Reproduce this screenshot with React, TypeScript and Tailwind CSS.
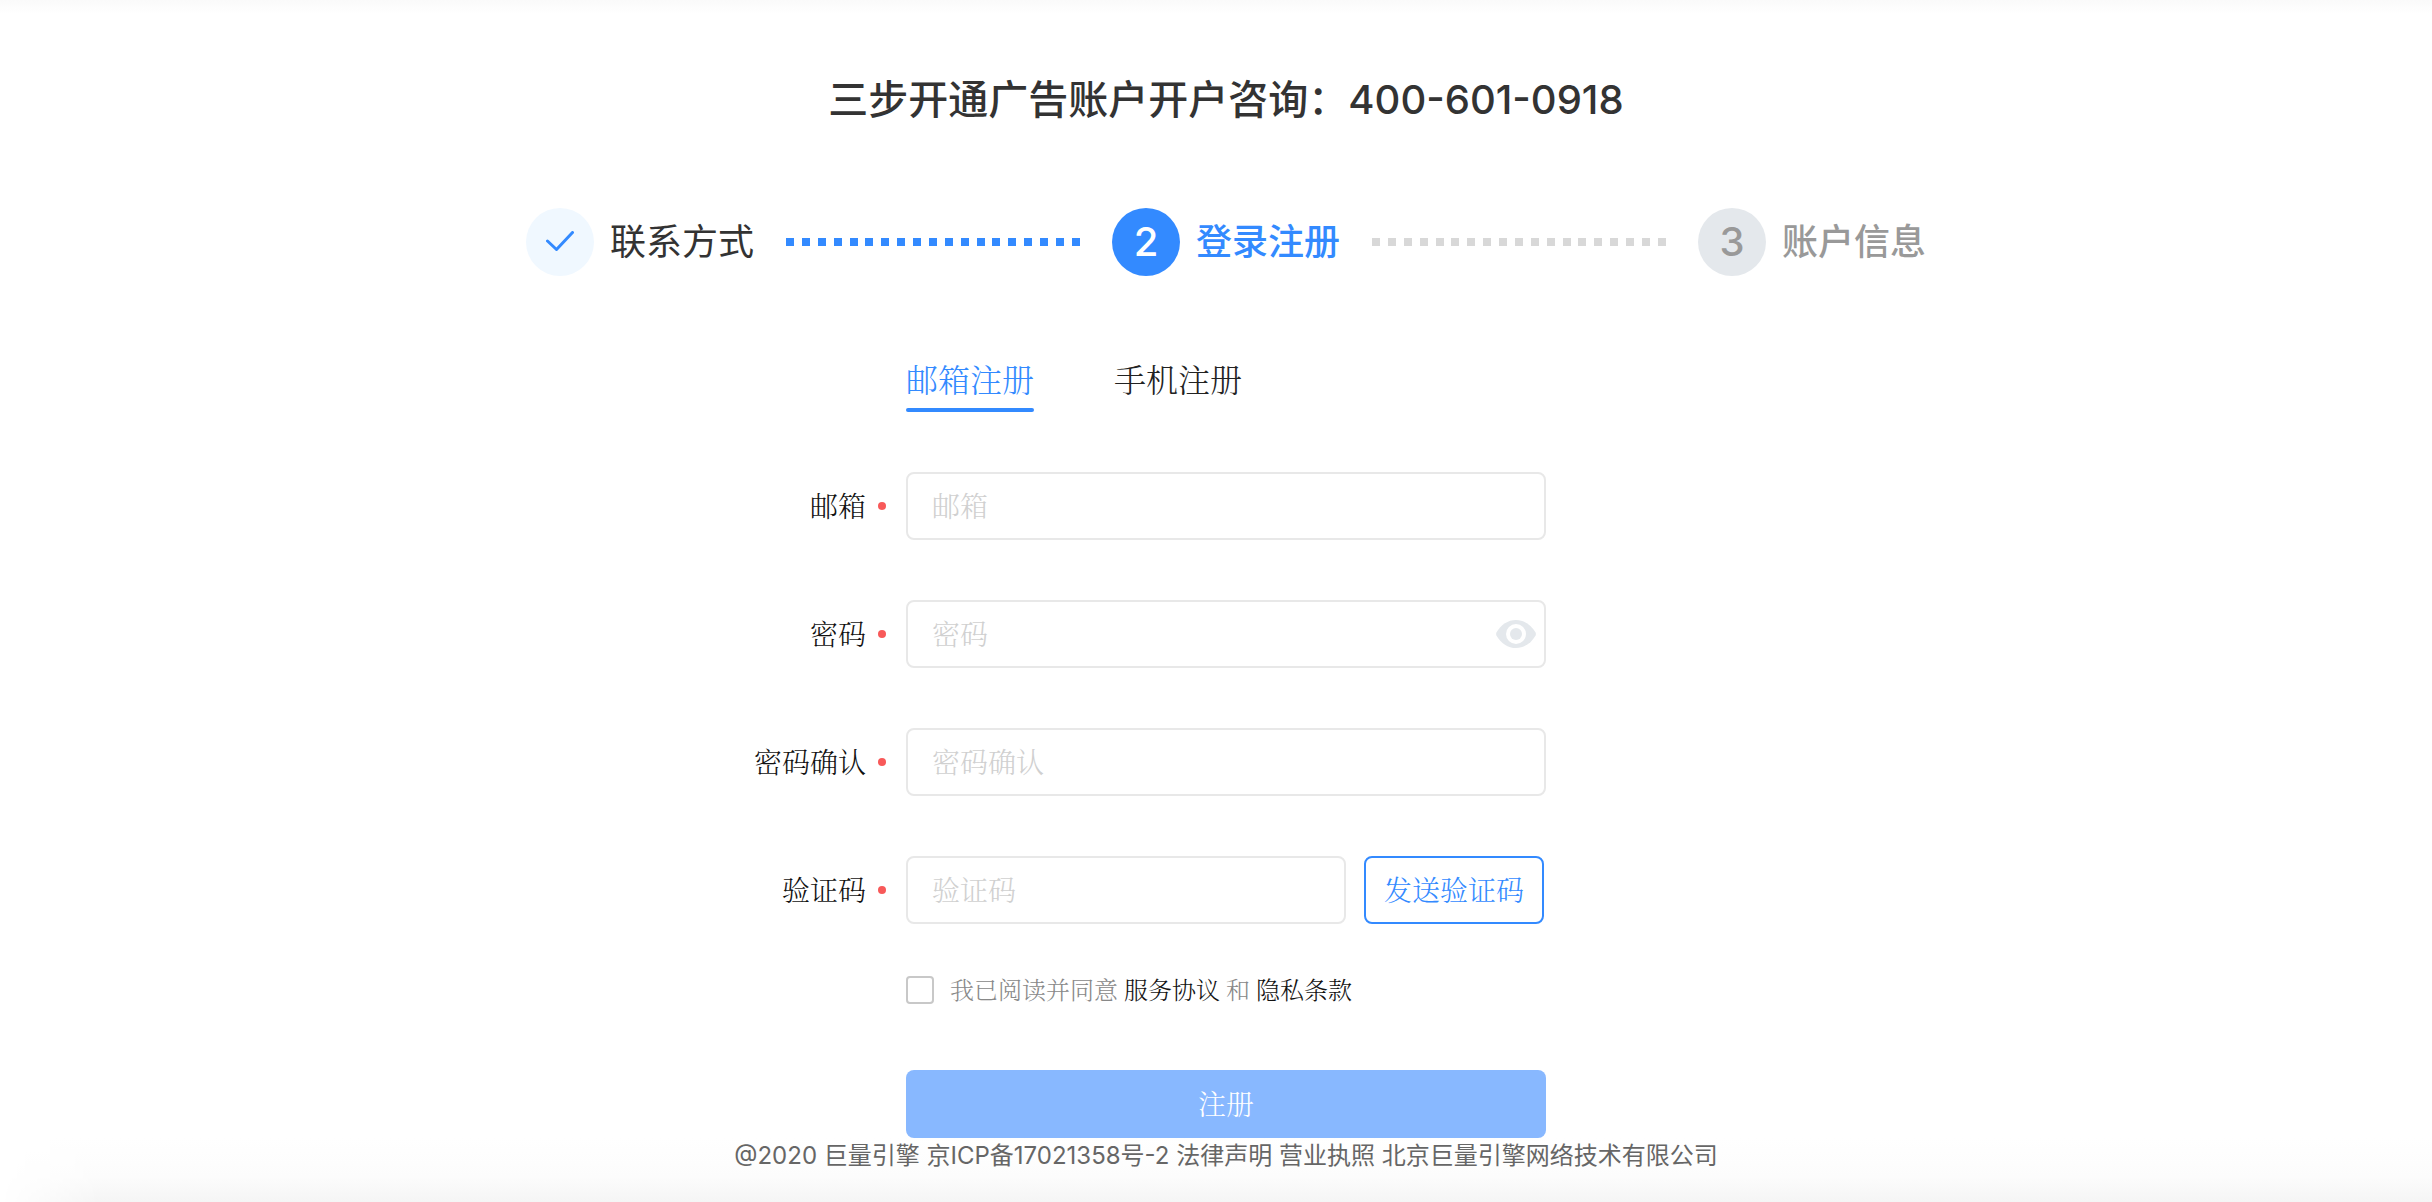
import type { ReactNode } from 'react';

type FieldProps = {
  id: string;
  label: string;
  type?: string;
  children?: ReactNode;
};

function Field({ id, label, type = 'text', children }: FieldProps) {
  return (
    <div className="grid grid-cols-[1fr_640px_1fr] items-center">
      <label htmlFor={id} className="flex items-center justify-end gap-3 pr-5 text-[28px] leading-10 text-[#111]">
        <span className="pt-1">{label}</span>
        <span className="size-2 rounded-full bg-[#f85959]" />
      </label>
      <div className="flex items-center gap-[18px]">
        <div className="relative flex-1">
          <input
            id={id}
            type={type}
            placeholder={label}
            className="block h-[68px] w-full rounded-lg border-2 border-[#e8e8e8] px-6 pt-1 text-[28px] text-[#222] outline-none placeholder:text-[#d0d0d0] focus:border-[#338aff]"
          />
          {id === 'password' && <EyeButton />}
        </div>
        {children}
      </div>
    </div>
  );
}

function EyeButton() {
  return (
    <button type="button" aria-label="显示密码" className="absolute top-5 right-2.5">
      <svg width="40" height="28" viewBox="0 0 40 28" fill="none">
        <path d="M0.4 12.6C5 4.6 12 0 20 0S35 4.6 39.6 12.6Q40.2 14 39.6 15.4C35 23.4 28 28 20 28S5 23.4 0.4 15.4Q-0.2 14 0.4 12.6Z" fill="#e4e8ec" />
        <circle cx="20" cy="14" r="10" fill="#fff" />
        <circle cx="20" cy="14" r="6" fill="#e4e8ec" />
      </svg>
    </button>
  );
}

function Dots({ color }: { color: string }) {
  return (
    <div className="mx-8 flex flex-1 justify-between">
      {Array.from({ length: 19 }, (_, i) => (
        <span key={i} className={`size-2 ${color}`} />
      ))}
    </div>
  );
}

function Steps() {
  return (
    <div className="mt-20 flex w-full max-w-[1400px] items-center text-4xl leading-[68px]">
      <div className="flex items-center gap-4 text-[#333]">
        <span className="flex size-[68px] items-center justify-center rounded-full bg-[#f0f8ff]">
          <svg width="28" height="22" viewBox="0 0 28 22" fill="none" stroke="#338aff" strokeWidth="3" strokeLinecap="round" strokeLinejoin="round">
            <path d="M1.5 10L10.500 18.500L26.500 1.500" />
          </svg>
        </span>
        联系方式
      </div>
      <Dots color="bg-[#338aff]" />
      <div className="flex items-center gap-4 font-medium text-[#338aff]">
        <span className="flex size-[68px] items-center justify-center rounded-full bg-[#338aff] text-[40px] text-white">2</span>
        登录注册
      </div>
      <Dots color="bg-[#d8d8d8]" />
      <div className="flex items-center gap-4 font-medium text-[#999]">
        <span className="flex size-[68px] items-center justify-center rounded-full bg-[#e4e8ec] text-[40px]">3</span>
        账户信息
      </div>
    </div>
  );
}

export default function App() {
  return (
    <div className="flex min-h-screen flex-col bg-white bg-[linear-gradient(#fafafa,#fff_14px)] font-['Inter','Noto_Sans_CJK_SC',sans-serif]">
      <main className="flex flex-col items-center pt-[72px] pl-5">
        <h1 className="text-[40px] leading-[56px] font-medium text-[#333]">三步开通广告账户开户咨询：400-601-0918</h1>
        <Steps />
        <form className="mt-20 w-full font-['Liberation_Serif','Noto_Serif_CJK_SC','Songti_SC','Noto_Sans_CJK_SC',serif] font-light">
          <div className="mx-auto flex w-[640px] gap-20 text-[32px] leading-[50px]">
            <button type="button" className="text-[#338aff]">
              邮箱注册
              <span className="mt-0.5 block h-1 rounded-full bg-[#338aff]" />
            </button>
            <button type="button" className="self-start text-[#222]">手机注册</button>
          </div>
          <div className="mt-[60px] flex flex-col gap-[60px]">
            <Field id="email" label="邮箱" />
            <Field id="password" label="密码" type="password" />
            <Field id="confirm" label="密码确认" type="password" />
            <Field id="code" label="验证码">
              <button type="button" className="mr-0.5 h-[68px] w-[180px] rounded-lg border-2 border-[#338aff] pt-1 text-[28px] text-[#338aff]">
                发送验证码
              </button>
            </Field>
          </div>
          <div className="mx-auto mt-[52px] flex w-[640px] items-start gap-4 text-2xl leading-[30px] text-[#888]">
            <input id="agree" type="checkbox" className="size-7 appearance-none rounded border-2 border-[#c8c8c8] checked:bg-[#338aff]" />
            <label htmlFor="agree">
              我已阅读并同意 <a href="#" className="text-[#111]">服务协议</a> 和 <a href="#" className="text-[#111]">隐私条款</a>
            </label>
          </div>
          <button type="submit" className="mx-auto mt-16 block h-[68px] w-[640px] rounded-lg bg-[#88b8ff] pt-1 text-[28px] text-white">
            注册
          </button>
        </form>
      </main>
      <footer className="relative flex-1 pl-5 text-center text-2xl leading-9 text-[#666]">
        <div className="absolute inset-0 bg-linear-to-b from-white via-[#fcfcfc] via-60% to-[#f5f5f5] mask-[linear-gradient(to_right,transparent,#000_100px)]" />
        <p className="relative">@2020 巨量引擎 京ICP备17021358号-2 法律声明 营业执照 北京巨量引擎网络技术有限公司</p>
      </footer>
    </div>
  );
}
